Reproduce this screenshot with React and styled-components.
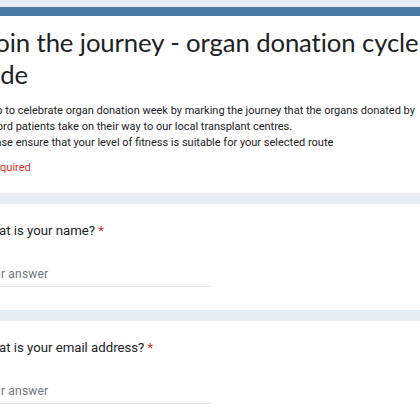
import React from 'react'
import styled, { createGlobalStyle } from 'styled-components'

const GlobalStyle = createGlobalStyle`
  html, body {
    margin: 0;
    padding: 0;
    background: #e6edf4;
    overflow: hidden;
  }
`

const App = () => {
  return (
    <>
      <GlobalStyle />
      <Page>
        <HeaderCard>
          <Title>Join the journey - organ donation cycle ride</Title>
          <Description>
            <p>Help to celebrate organ donation week by marking the journey that the organs donated by</p>
            <p>Oxford patients take on their way to our local transplant centres.</p>
            <p>Please ensure that your level of fitness is suitable for your selected route</p>
          </Description>
          <Required>* Required</Required>
        </HeaderCard>

        <QuestionCard>
          <Question>
            What is your name? <Star>*</Star>
          </Question>
          <AnswerInput placeholder="Your answer" />
        </QuestionCard>

        <QuestionCard>
          <Question>
            What is your email address? <Star>*</Star>
          </Question>
          <AnswerInput placeholder="Your answer" />
        </QuestionCard>
      </Page>
    </>
  )
}

export default App

const Page = styled.div`
  width: 480px;
  margin-left: -40px;
  padding-top: 7px;
  display: flex;
  flex-direction: column;
  gap: 11px;
`

const Card = styled.div`
  background: #ffffff;
  border-radius: 8px;
  padding: 0 20px;
  box-sizing: border-box;
  display: flex;
  flex-direction: column;
`

const HeaderCard = styled(Card)`
  border-top: 9px solid #4a7aa5;
  height: 186px;
`

const Title = styled.div`
  font-family: Lato, "Open Sans", sans-serif;
  font-size: 25.7px;
  letter-spacing: -0.1px;
  line-height: 32px;
  color: #202124;
  margin-top: 10px;
  padding-left: 5px;
  width: 440px;
`

const Description = styled.div`
  font-family: Roboto, "Liberation Sans", sans-serif;
  font-size: 11px;
  line-height: 16px;
  color: #202124;
  margin-top: 13px;
  p {
    margin: 0;
    white-space: nowrap;
  }
`

const Required = styled.div`
  font-family: Roboto, "Liberation Sans", sans-serif;
  font-size: 11px;
  line-height: 16px;
  color: #d93025;
  margin-top: 9px;
`

const QuestionCard = styled(Card)`
  height: 106px;
  padding-top: 17px;
`

const Question = styled.div`
  font-family: Roboto, "Liberation Sans", sans-serif;
  font-size: 13.2px;
  line-height: 20px;
  color: #202124;
`

const Star = styled.span`
  color: #d93025;
`

const AnswerInput = styled.input`
  width: 230px;
  margin-top: 26px;
  border: none;
  border-bottom: 1px solid #e0e2e6;
  outline: none;
  padding: 0 0 5px 0;
  font-family: Roboto, "Liberation Sans", sans-serif;
  font-size: 12px;
  letter-spacing: 0.2px;
  color: #202124;
  background: transparent;
  &::placeholder {
    color: #70757a;
  }
`
